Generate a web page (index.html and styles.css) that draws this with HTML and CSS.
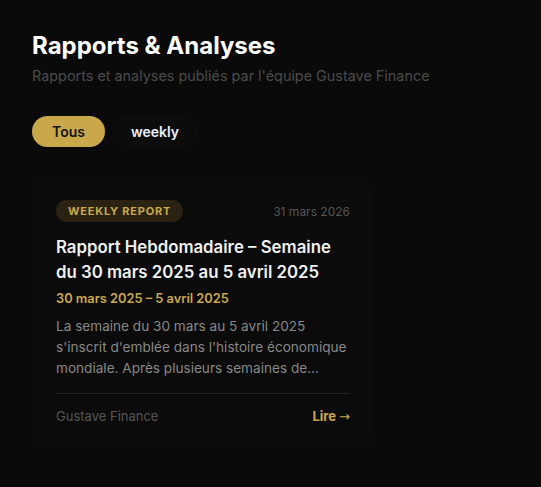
FILE: index.html
```html
<!DOCTYPE html>
<html lang="fr">
  <head>
    <meta charset="utf-8">
    <title>Rapports &amp; Analyses</title>
    <meta name="viewport" content="width=device-width, initial-scale=1">
    <link rel="stylesheet" href="styles.css">
  </head>
  <body>
    <main class="page">
      <header class="page-header">
        <h1>Rapports &amp; Analyses</h1>
        <p class="subtitle">Rapports et analyses publiés par l'équipe Gustave Finance</p>
      </header>

      <!-- Filters -->
      <div class="filters">
        <button class="pill active">Tous</button>
        <button class="pill">weekly</button>
      </div>

      <div class="report-grid">
        <article class="card">
          <div class="card-top">
            <span class="badge">Weekly Report</span>
            <span class="pub-date">31 mars 2026</span>
          </div>
          <h3 class="card-title">Rapport Hebdomadaire – Semaine du 30 mars 2025 au 5 avril 2025</h3>
          <p class="period">30 mars 2025 – 5 avril 2025</p>
          <p class="excerpt">La semaine du 30 mars au 5 avril 2025 s'inscrit d'emblée dans l'histoire économique mondiale. Après plusieurs semaines de...</p>
          <div class="card-footer">
            <span class="author">Gustave Finance</span>
            <a class="read" href="#">Lire <span class="arrow">→</span></a>
          </div>
        </article>
      </div>
    </main>
  </body>
</html>
```

FILE: styles.css
```css
body {
  margin: 0;
  background: #0a0a0a;
  font-family: Inter, "Noto Sans", sans-serif;
  color: #f0f0f0;
}

.page {
  padding: 32px;
}

h1 {
  margin: 0;
  font-size: 24px;
  font-weight: 700;
  line-height: 28px;
  color: #fff;
}

.subtitle {
  margin: 6px 0 0;
  font-size: 14.4px;
  line-height: 20px;
  color: #4a4a4a;
}

.filters {
  display: flex;
  gap: 6px;
  margin-top: 30px;
}

.pill {
  height: 31px;
  padding: 0 20px;
  border: none;
  border-radius: 16px;
  background: #0c0c0c;
  color: #e8f0ff;
  font-family: inherit;
  font-size: 14px;
  font-weight: 600;
}

.pill.active {
  background: #c9a84c;
  color: #111;
}

.report-grid {
  display: grid;
  grid-template-columns: repeat(auto-fill, 342px);
  gap: 20px;
  margin-top: 29px;
}

.card {
  padding: 24px;
  background: #0b0b0b;
  border-radius: 12px;
}

.card-top {
  display: flex;
  justify-content: space-between;
  align-items: center;
}

.badge {
  padding: 4px 12px;
  border-radius: 11px;
  background: #2a2313;
  color: #c9a84c;
  font-size: 11px;
  font-weight: 700;
  line-height: 14px;
  letter-spacing: 0.8px;
  text-transform: uppercase;
}

.pub-date {
  font-size: 12px;
  color: #555;
}

.card-title {
  margin: 13px 0 0;
  font-size: 16.8px;
  font-weight: 600;
  line-height: 25px;
  color: #f0f0f0;
}

.period {
  margin: 5px 0 0;
  font-size: 12.8px;
  font-weight: 600;
  line-height: 18px;
  color: #c9a84c;
}

.excerpt {
  margin: 8px 0 0;
  font-size: 13.6px;
  line-height: 21px;
  color: #888;
}

.card-footer {
  display: flex;
  justify-content: space-between;
  align-items: center;
  margin-top: 14px;
  padding-top: 14px;
  border-top: 1px solid #222;
}

.author {
  font-size: 13px;
  color: #555;
}

.read {
  font-size: 13px;
  font-weight: 700;
  color: #c9a84c;
  text-decoration: none;
}

.arrow {
  font-family: "DejaVu Sans", sans-serif;
  font-weight: 400;
}
```
